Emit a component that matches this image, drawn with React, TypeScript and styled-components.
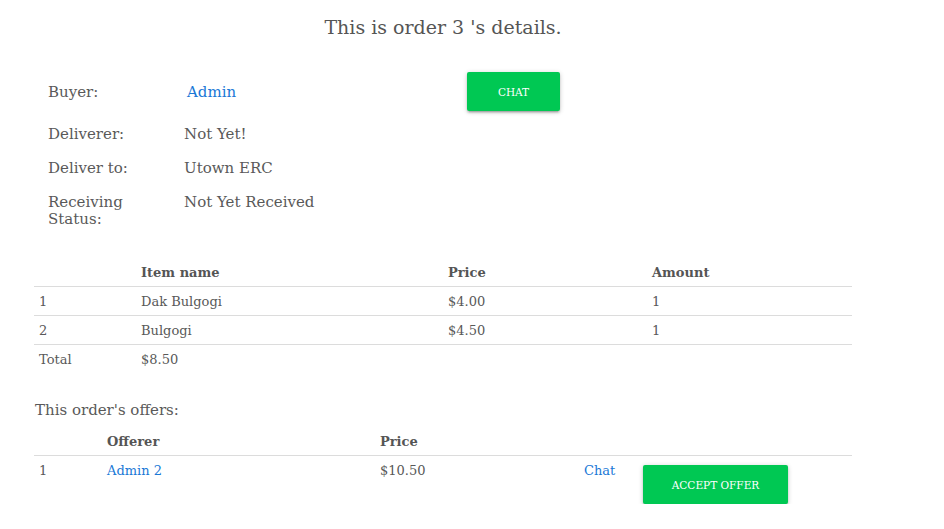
import React from "react";
import styled, { createGlobalStyle } from "styled-components";

const Global = createGlobalStyle`
  html, body { margin: 0; padding: 0; background: #fff; }
  body { font-family: "DejaVu Serif", "Liberation Serif", serif; color: #595959; }
`;

const Page = styled.div`
  width: 818px;
  margin-left: 34px;
`;

const Title = styled.h1`
  margin: 0;
  padding-top: 14px;
  height: 26px;
  font-size: 19px;
  line-height: 26px;
  font-weight: normal;
  text-align: center;
  color: #555;
`;

const Info = styled.div`
  margin-top: 32px;
  padding-left: 14px;
  display: grid;
  grid-template-columns: 136px 283px auto;
  font-size: 15px;
`;

const Label = styled.div<{ $first?: boolean }>`
  width: 100px;
  line-height: 17px;
  padding: ${(p) => (p.$first ? "12px 0 10px" : "9px 0 8px")};
`;

const Value = styled.div<{ $first?: boolean }>`
  line-height: 17px;
  padding: ${(p) => (p.$first ? "12px 0 10px 3px" : "9px 0 8px")};
`;

const Spacer = styled.div`
  height: 6px;
  grid-column: 1 / -1;
`;

const Link = styled.a`
  color: #1a78d6;
  text-decoration: none;
  cursor: pointer;
`;

const Button = styled.button<{ $w: number }>`
  width: ${(p) => p.$w}px;
  height: 39px;
  border: none;
  border-radius: 2px;
  background: #00c853;
  color: #fff;
  font-family: "DejaVu Serif", "Liberation Serif", serif;
  font-size: 10.5px;
  text-transform: uppercase;
  box-shadow: 0 2px 2px 0 rgba(0, 0, 0, 0.14), 0 3px 1px -2px rgba(0, 0, 0, 0.12),
    0 1px 5px 0 rgba(0, 0, 0, 0.2);
  cursor: pointer;
  padding: 0;
`;

const Table = styled.table<{ $top?: number }>`
  width: 818px;
  border-collapse: collapse;
  font-size: 13px;
  table-layout: fixed;
  margin-top: ${(p) => p.$top ?? 0}px;
`;

const Th = styled.th<{ $w?: number }>`
  text-align: left;
  font-weight: bold;
  color: #555;
  padding: 8px 5px 6px;
  line-height: 14px;
  width: ${(p) => (p.$w ? `${p.$w - 10}px` : "auto")};
`;

const Tr = styled.tr<{ $border?: boolean }>`
  border-bottom: ${(p) => (p.$border ? "1px solid #dcdcdc" : "none")};
`;

const Td = styled.td`
  padding: 8px 5px 6px;
  line-height: 14px;
  vertical-align: top;
`;

const BtnCell = styled.td`
  padding: 9px 5px 0;
  vertical-align: top;
`;

const OffersTitle = styled.div`
  font-size: 15px;
  line-height: 20px;
  padding: 27px 0 7px 1px;
`;

export default function App() {
  return (
    <>
      <Global />
      <Page>
        <Title>This is order 3 's details.</Title>
        <Info>
          <Label $first>Buyer:</Label>
          <Value $first>
            <Link>Admin</Link>
          </Value>
          <div>
            <Button $w={93}>Chat</Button>
          </div>
          <Spacer />
          <Label>Deliverer:</Label>
          <Value>Not Yet!</Value>
          <div />
          <Label>Deliver to:</Label>
          <Value>Utown ERC</Value>
          <div />
          <Label>Receiving Status:</Label>
          <Value>Not Yet Received</Value>
          <div />
        </Info>
        <Table $top={22}>
          <thead>
            <Tr $border>
              <Th $w={102}></Th>
              <Th $w={307}>Item name</Th>
              <Th $w={204}>Price</Th>
              <Th>Amount</Th>
            </Tr>
          </thead>
          <tbody>
            <Tr $border>
              <Td>1</Td>
              <Td>Dak Bulgogi</Td>
              <Td>$4.00</Td>
              <Td>1</Td>
            </Tr>
            <Tr $border>
              <Td>2</Td>
              <Td>Bulgogi</Td>
              <Td>$4.50</Td>
              <Td>1</Td>
            </Tr>
            <Tr>
              <Td>Total</Td>
              <Td>$8.50</Td>
              <Td></Td>
              <Td></Td>
            </Tr>
          </tbody>
        </Table>
        <OffersTitle>This order's offers:</OffersTitle>
        <Table>
          <thead>
            <Tr $border>
              <Th $w={68}></Th>
              <Th $w={273}>Offerer</Th>
              <Th $w={204}>Price</Th>
              <Th $w={59}></Th>
              <Th></Th>
            </Tr>
          </thead>
          <tbody>
            <Tr>
              <Td>1</Td>
              <Td>
                <Link>Admin 2</Link>
              </Td>
              <Td>$10.50</Td>
              <Td>
                <Link>Chat</Link>
              </Td>
              <BtnCell>
                <Button $w={145}>Accept Offer</Button>
              </BtnCell>
            </Tr>
          </tbody>
        </Table>
      </Page>
    </>
  );
}
